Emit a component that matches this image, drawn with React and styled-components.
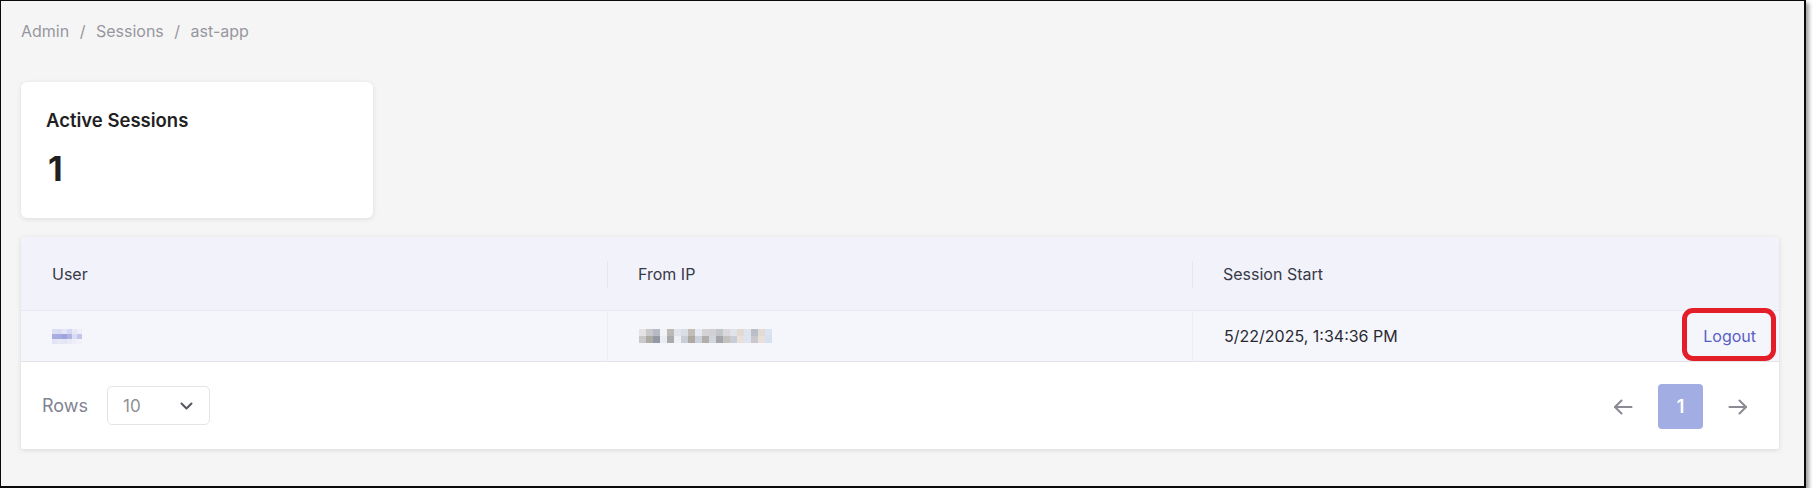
import React from 'react';
import styled, { createGlobalStyle } from 'styled-components';

const Global = createGlobalStyle`
  html, body {
    margin: 0;
    padding: 0;
    background: #ffffff;
    font-family: Inter, "Noto Sans", "Liberation Sans", sans-serif;
  }
  * { box-sizing: border-box; }
`;

const Frame = styled.div`
  width: 1806px;
  height: 488px;
  background: #f5f5f5;
  border-style: solid;
  border-color: #0a0a0a;
  border-width: 1px 2px 2px 1px;
  box-shadow: 3px 3px 4px rgba(0, 0, 0, 0.38);
  padding: 18px 25px 0 20px;
`;

const Crumbs = styled.nav`
  display: flex;
  align-items: center;
  height: 24px;
  line-height: 24px;
  font-size: 16px;
  color: #97979f;
`;

const Sep = styled.span`
  padding: 0 10.5px;
`;

const StatCard = styled.div`
  margin-top: 39px;
  width: 352px;
  height: 136px;
  background: #fff;
  border-radius: 6px;
  box-shadow: 0 1px 5px rgba(0, 0, 0, 0.1);
  padding: 25px 25px;
`;

const StatTitle = styled.div`
  font-size: 18.5px;
  line-height: 26px;
  font-weight: 600;
  color: #1f1f24;
`;

const StatValue = styled.div`
  margin-top: 16px;
  font-size: 34px;
  line-height: 40px;
  font-weight: 700;
  color: #1f1f24;
  padding-left: 2px;
`;

const TableCard = styled.div`
  margin-top: 19px;
  width: 1758px;
  background: #fff;
  border-radius: 2px;
  box-shadow: 0 1px 5px rgba(0, 0, 0, 0.12);
`;

const Row = styled.div`
  display: grid;
  grid-template-columns: 586px 585px 1fr;
  height: ${p => (p.$head ? '74px' : '51px')};
  background: ${p => (p.$head ? '#f1f2fa' : '#f5f6fb')};
  border-bottom: 1px solid ${p => (p.$head ? '#e8e9f1' : '#e4e4e8')};
`;

const HeadCell = styled.div`
  position: relative;
  display: flex;
  align-items: center;
  padding-left: 31px;
  font-size: 16px;
  color: #383947;

  & + &::before {
    content: '';
    position: absolute;
    left: 0;
    top: 50%;
    height: 27px;
    margin-top: -13px;
    width: 1px;
    background: #e6e7ee;
  }
`;

const Cell = styled.div`
  display: flex;
  align-items: center;
  justify-content: space-between;
  padding-left: 31px;
  padding-right: 6px;
  font-size: 16px;
  color: #2a2a33;

  & + & {
    border-left: 1px solid #ecedf3;
  }
`;

const LogoutButton = styled.button`
  position: relative;
  height: 45px;
  padding: 0 17px;
  border: none;
  background: transparent;
  font-family: inherit;
  font-size: 16px;
  color: #5860c6;
  cursor: pointer;

  &::after {
    content: '';
    position: absolute;
    top: -6px;
    bottom: -2px;
    left: -4px;
    right: -3px;
    border: 5px solid #e41e29;
    border-radius: 11px;
    pointer-events: none;
  }
`;

const Footer = styled.div`
  display: flex;
  align-items: center;
  justify-content: space-between;
  height: 87px;
  padding: 0 31px 0 21px;
`;

const RowsPicker = styled.div`
  display: flex;
  align-items: center;
  gap: 19px;
  font-size: 18px;
  color: #7f8391;
`;

const Select = styled.div`
  display: flex;
  align-items: center;
  justify-content: space-between;
  width: 103px;
  height: 39px;
  padding: 0 16px 0 15px;
  border: 1px solid #e4e4e6;
  border-radius: 5px;
  font-size: 17px;
  color: #8f8f95;
`;

const Pager = styled.div`
  display: flex;
  align-items: center;
  gap: 25px;
  margin-top: 2px;
`;

const PageBtn = styled.div`
  width: 45px;
  height: 45px;
  border-radius: 4px;
  background: ${p => (p.$active ? '#a2ade3' : 'transparent')};
  color: #fff;
  font-size: 18px;
  font-weight: 600;
  display: flex;
  align-items: center;
  justify-content: center;
`;

const Arrow = ({ dir }) => (
  <svg width="20" height="16" viewBox="0 0 20 16" fill="none"
    stroke="#8b8b93" strokeWidth="2.1" strokeLinecap="round" strokeLinejoin="round"
    style={dir === 'right' ? { transform: 'scaleX(-1)' } : undefined}>
    <path d="M18.5 8H2" />
    <path d="M8.5 1.5L2 8l6.5 6.5" />
  </svg>
);

const Chevron = () => (
  <svg width="13" height="8" viewBox="0 0 13 8" fill="none"
    stroke="#55565c" strokeWidth="2" strokeLinecap="round" strokeLinejoin="round">
    <path d="M1.5 1.5l5 5 5-5" />
  </svg>
);

// pixelated redaction blocks
const Mosaic = ({ cols, rows, cell, cellH, colors }) => (
  <svg width={cols * cell} height={rows * cellH} shapeRendering="crispEdges">
    {colors.map((c, i) => (
      <rect key={i} x={(i % cols) * cell} y={Math.floor(i / cols) * cellH}
        width={cell} height={cellH} fill={c} />
    ))}
  </svg>
);

const userBlur = [
  '#dcdff3', '#d9dcf2', '#e4e5f5', '#d5d8f1', '#e6e8f6', '#eeeff8',
  '#a9aee2', '#a6abe1', '#9ea5dd', '#afb4e4', '#d9dcf2', '#c2c6ea',
  '#e2e4f5', '#e6e8f6', '#e4e6f5', '#e9eaf7', '#eeeff8', '#f2f3fa',
];

const ipBlur = [
  '#e4e2e3', '#c9c9cb', '#b6bac4', '#f2f3f7', '#bdb9b6', '#e2e4eb', '#d9dde5',
  '#c1bdb9', '#e5e9f1', '#d5d3d3', '#d1d1d5', '#c2c5ca', '#d9d9dd', '#e1e3eb',
  '#e2dad2', '#dee3ed', '#babec6', '#e2dad3', '#d9e3f1',
  '#c9c9ca', '#aeaaa6', '#9299a5', '#e9ecf1', '#aaaaaa', '#eef0f5', '#c9cdd5',
  '#aeaaa2', '#cdd1dc', '#b2aeaa', '#d1d5dd', '#a2a6aa', '#c5c2be', '#c9cdd5',
  '#e9e1d9', '#dde5f1', '#c9c9cd', '#e9e1d9', '#d5e1f1',
];

export default function App() {
  return (
    <>
      <Global />
      <Frame>
        <Crumbs>
          <span>Admin</span>
          <Sep>/</Sep>
          <span>Sessions</span>
          <Sep>/</Sep>
          <span>ast-app</span>
        </Crumbs>

        <StatCard>
          <StatTitle>Active Sessions</StatTitle>
          <StatValue>1</StatValue>
        </StatCard>

        <TableCard>
          <Row $head>
            <HeadCell>User</HeadCell>
            <HeadCell>From IP</HeadCell>
            <HeadCell>Session Start</HeadCell>
          </Row>
          <Row>
            <Cell>
              <Mosaic cols={6} rows={3} cell={5} cellH={5} colors={userBlur} />
            </Cell>
            <Cell>
              <Mosaic cols={19} rows={2} cell={7} cellH={7} colors={ipBlur} />
            </Cell>
            <Cell>
              <span>5/22/2025, 1:34:36 PM</span>
              <LogoutButton>Logout</LogoutButton>
            </Cell>
          </Row>
          <Footer>
            <RowsPicker>
              Rows
              <Select>
                <span>10</span>
                <Chevron />
              </Select>
            </RowsPicker>
            <Pager>
              <Arrow dir="left" />
              <PageBtn $active>1</PageBtn>
              <Arrow dir="right" />
            </Pager>
          </Footer>
        </TableCard>
      </Frame>
    </>
  );
}
